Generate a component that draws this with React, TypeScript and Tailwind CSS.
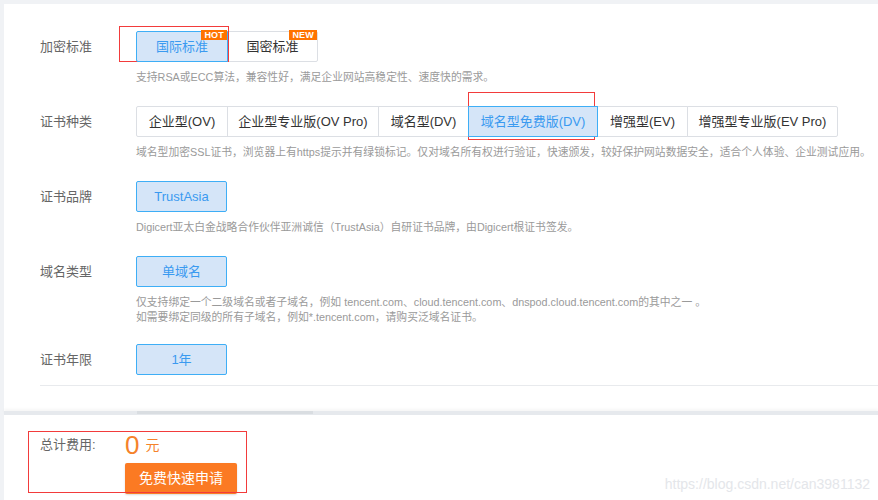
import React from "react";

const FONT = { fontFamily: '"Liberation Sans", Arial, "Noto Sans CJK SC", sans-serif' };

function Badge({ text }: { text: string }) {
  return (
    <span className="absolute -top-[2px] right-0 h-[10px] px-[3px] bg-[#ff7300] text-white text-[9px] leading-[10px] font-bold tracking-[0.2px]">
      {text}
    </span>
  );
}

type Opt = { label: string; w: string; selected?: boolean; badge?: string };

function Group({ opts }: { opts: Opt[] }) {
  return (
    <div className="flex">
      {opts.map((o, i) => (
        <div
          key={o.label}
          className={
            "relative shrink-0 h-[31px] flex items-center justify-center text-[13px] border " +
            o.w +
            (i > 0 ? " -ml-px" : "") +
            (i === 0 ? " rounded-l-[2px]" : "") +
            (i === opts.length - 1 ? " rounded-r-[2px]" : "") +
            (o.selected
              ? " z-10 bg-[#d5e5f8] border-[#3eaef6] text-[#3a9af0]"
              : " bg-white border-[#dcdfe4] text-[#333]")
          }
        >
          {o.label}
          {o.badge ? <Badge text={o.badge} /> : null}
        </div>
      ))}
    </div>
  );
}

function Row({
  label,
  children,
  desc,
  mb = "mb-[21px]",
}: {
  label: string;
  children: React.ReactNode;
  desc?: React.ReactNode;
  mb?: string;
}) {
  return (
    <div className={"flex " + mb}>
      <div className="shrink-0 w-[96px] h-[31px] flex items-center text-[13px] text-[#666]">{label}</div>
      <div className="flex flex-col">
        {children}
        {desc ? (
          <div className="mt-[8px] text-[10.8px] leading-[15px] text-[#9a9a9a] whitespace-nowrap">{desc}</div>
        ) : null}
      </div>
    </div>
  );
}

export default function App() {
  return (
    <div className="relative w-[878px] h-[500px] overflow-hidden bg-[#f0f2f5] pt-[4px] pl-[4px]" style={FONT}>
      <div className="bg-white h-[407px] pt-[27px] pl-[36px]">
        <Row label="加密标准" desc="支持RSA或ECC算法，兼容性好，满足企业网站高稳定性、速度快的需求。">
          <Group
            opts={[
              { label: "国际标准", w: "w-[92px]", selected: true, badge: "HOT" },
              { label: "国密标准", w: "w-[91px]", badge: "NEW" },
            ]}
          />
        </Row>
        <Row
          label="证书种类"
          desc="域名型加密SSL证书，浏览器上有https提示并有绿锁标记。仅对域名所有权进行验证，快速颁发，较好保护网站数据安全，适合个人体验、企业测试应用。"
        >
          <Group
            opts={[
              { label: "企业型(OV)", w: "w-[92px]" },
              { label: "企业型专业版(OV Pro)", w: "w-[152px]" },
              { label: "域名型(DV)", w: "w-[91px]" },
              { label: "域名型免费版(DV)", w: "w-[130px]", selected: true },
              { label: "增强型(EV)", w: "w-[91px]" },
              { label: "增强型专业版(EV Pro)", w: "w-[151px]" },
            ]}
          />
        </Row>
        <Row label="证书品牌" desc="Digicert亚太白金战略合作伙伴亚洲诚信（TrustAsia）自研证书品牌，由Digicert根证书签发。">
          <Group opts={[{ label: "TrustAsia", w: "w-[91px]", selected: true }]} />
        </Row>
        <Row
          label="域名类型"
          mb="mb-[19px]"
          desc={
            <>
              <div>仅支持绑定一个二级域名或者子域名，例如 tencent.com、cloud.tencent.com、dnspod.cloud.tencent.com的其中之一 。</div>
              <div>如需要绑定同级的所有子域名，例如*.tencent.com，请购买泛域名证书。</div>
            </>
          }
        >
          <Group opts={[{ label: "单域名", w: "w-[91px]", selected: true }]} />
        </Row>
        <Row label="证书年限" mb="mb-0">
          <Group opts={[{ label: "1年", w: "w-[91px]", selected: true }]} />
        </Row>
        <div className="mt-[10px] h-px bg-[#e8eaed]" />
      </div>
      <div className="h-[4px] bg-[#e6e9ed] shadow-[0_-2px_3px_rgba(0,0,0,0.04)]">
        <div className="ml-[133px] w-[176px] h-[3px] bg-[#d9dde1]" />
      </div>
      <div className="bg-white h-[85px] pt-[15px] pl-[36px]">
        <div className="flex h-[30px] items-center">
          <div className="w-[85px] text-[13px] text-[#666]">总计费用:</div>
          <span className="text-[26px] leading-[30px] text-[#f5822a]">0</span>
          <span className="ml-[6px] text-[14px] text-[#f5822a]">元</span>
        </div>
        <div className="ml-[85px] mt-[3px] w-[112px] h-[31px] bg-[#fb7a23] rounded-[2px] flex items-center justify-center text-white text-[14px] shadow-[0_1px_2px_rgba(0,0,0,0.15)]">
          免费快速申请
        </div>
      </div>

      <div className="absolute left-[119px] top-[26px] w-[110px] h-[36px] border border-[#f23b3b] pointer-events-none" />
      <div className="absolute left-[468px] top-[92px] w-[127px] h-[48px] border border-[#f23b3b] pointer-events-none" />
      <div className="absolute left-[28px] top-[431px] w-[219px] h-[62px] border border-[#f23b3b] pointer-events-none" />
      <div className="absolute right-[8px] bottom-[8px] text-[14px] leading-[16px] text-[#e4e6ea]">
        https://blog.csdn.net/can3981132
      </div>
    </div>
  );
}
